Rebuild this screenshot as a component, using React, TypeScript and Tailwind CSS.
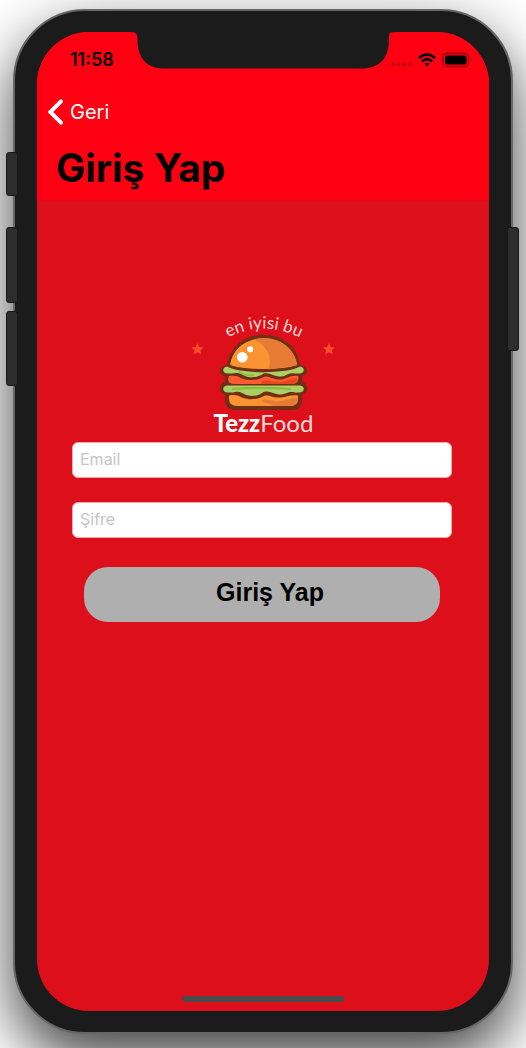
import React from "react";

function Notch() {
  return (
    <svg
      className="absolute left-1/2 top-0 h-[37px] w-[264px] -translate-x-1/2"
      viewBox="0 0 264 37"
      aria-hidden="true"
    >
      <path
        fill="#1b1b1b"
        d="M0 0H264V.3H261C258 .5 258 3 258 7C258 26 249 36.500 230 36.500H34C15 36.500 6.500 26 6.500 7C6.500 3 5.500 .5 2 .3H0Z"
      />
    </svg>
  );
}

function StatusIcons() {
  return (
    <svg className="h-5 w-20" viewBox="0 0 80 20" aria-hidden="true">
      <g fill="#000" fillOpacity=".28">
        <circle cx="2" cy="14.300" r="1.900" />
        <circle cx="7.600" cy="14.300" r="1.900" />
        <circle cx="13.200" cy="14.300" r="1.900" />
        <circle cx="18.800" cy="14.300" r="1.900" />
      </g>
      <g fill="none" stroke="#000" strokeWidth="2.600">
        <path d="M27.800 8.200Q36 .8 44.200 8.200" />
        <path d="M30.900 11.500Q36 6.800 41.100 11.500" />
      </g>
      <path d="M33.400 13.800Q36 11.500 38.600 13.800L36 16.500Z" />
      <rect x="52" y="3.500" width="25.500" height="13" rx="3.500" fill="none" stroke="#000" strokeOpacity=".38" strokeWidth="1.300" />
      <rect x="54" y="5.500" width="21.500" height="9" rx="1.800" />
      <path d="M79 8.200Q80.300 10 79 11.800Z" fillOpacity=".5" />
    </svg>
  );
}

function Logo() {
  return (
    <svg
      className="h-[140px] w-[165px]"
      viewBox="0 0 165 140"
      role="img"
      aria-label="TezzFood, en iyisi bu"
    >
      <defs>
        <path id="slogan-arc" d="M36 39Q82 8 130 39" />
        <clipPath id="bun-clip">
          <path d="M48.500 62C50 46 64 33 82.500 33S115 46 116.500 62C106 68 59 68 48.500 62Z" />
        </clipPath>
      </defs>
      <text fill="#ffd9d0" fontSize="17" className="font-['Lato']">
        <textPath href="#slogan-arc" startOffset="50%" textAnchor="middle">
          en iyisi bu
        </textPath>
      </text>
      <g fill="#ff4a2b">
        <path d="M16.500 38L18.300 42.100 22.500 42.500 19.300 45.300 20.300 49.500 16.500 47.300 12.700 49.500 13.700 45.300 10.500 42.500 14.700 42.100Z" />
        <path d="M148 38L149.800 42.100 154 42.500 150.800 45.300 151.800 49.500 148 47.300 144.200 49.500 145.200 45.300 142 42.500 146.200 42.100Z" />
      </g>
      <g fill="#702f14">
        <path d="M46 60C49 41 64 29.800 82.500 29.800S116 41 119 60C128 61 128 70 121 71V77C128 79 128 88 121 89.500V95Q121 105 110 105H55Q44 105 44 95V89.500C37 88 37 79 44 77V71C37 70 37 61 46 60Z" />
      </g>
      <g fill="#a9d065">
        <path d="M46 61.500C58 69 107 69 119 61.500C124 62 124 68 119 68.500H114C107 67 106 71 100 71.500C92 71.500 89 67 82.500 68.500C76 73 68 73.500 62 70C56 66 53 69 50 68.500H46C41 68 41 62 46 61.500Z" />
        <path d="M46 80.500H119C124 81 124 87 119 87.500H114C107 86 106 89 100 89.500C92 89.500 89 85 82.500 87C76 92 68 92 62 88.500C56 85 53 88 50 87.500H46C41 87 41 81 46 80.500Z" />
      </g>
      <path d="M51 84Q82 82 110 84" fill="none" stroke="#8abb3e" strokeWidth="2" />
      <path d="M58 67Q65 71.500 73 70" fill="none" stroke="#8abb3e" strokeWidth="1.500" />
      <path d="M48 71C55 70 57 71.500 61 73.500C69 76.500 77 75 84 71.500C89 71 92 75 100 74.500C106 74 109 70 117 71Q118 73 117 75Q116 79 111 79H54Q47 79 47 74Z" fill="#ff5a31" />
      <path d="M80 77C86 73.500 91 77.500 99 77C106 76.500 109 73 116 73Q116 79 111 79H81Z" fill="#e64622" />
      <path d="M48 90.500C55 89.500 57 90.500 61 92.500C69 95.500 77 94.500 84 90.500C89 90 92 93 100 92.500C106 92 109 89.500 117 90.500V94Q117 101 109 101H56Q48 101 48 94Z" fill="#f99431" />
      <path d="M80 95C88 93 91 97 99 96C106 95 109 92.500 117 93Q117 101 109 101H92C88 97 82 99 80 95Z" fill="#e77b35" />
      <path d="M48.500 60C51 44 64 33 82.500 33S114 44 116.500 60C106 66 59 66 48.500 60Z" fill="#f99431" stroke="#702f14" strokeWidth="1" />
      <path clipPath="url(#bun-clip)" d="M71 34C87 40 92 53 87 64.500L118 60V30H82Z" fill="#e77b35" />
      <circle cx="61.300" cy="52.300" r="5.300" fill="#fff" />
      <circle cx="69.200" cy="44.300" r="3" fill="#fff" />
      <text x="32.500" y="127" fontSize="24" fill="#fff" className="font-['Lato']">
        <tspan fontWeight="900">Tezz</tspan>
        <tspan fill="#ffdcd8">Food</tspan>
      </text>
    </svg>
  );
}

const SIDE_BUTTON = "absolute w-3 rounded-[3px] border border-[#181818] bg-[#2d2d2d]";
const FIELD =
  "block h-9 w-full rounded-[6px] border border-[#eea9a9] bg-white px-[7px] pb-[2px] text-base text-black outline-none placeholder:text-[#c5c5c8]";

export default function App() {
  return (
    <div className="flex min-h-screen flex-col overflow-hidden bg-white px-[13px] pb-[14px] pt-[9px] font-['Inter',sans-serif]">
      <div className="relative flex flex-1 flex-col">
        <div className="relative flex flex-1 flex-col rounded-[72px] border-2 border-[#666] bg-[#1b1b1b] px-[22px] pb-[21px] pt-[21px] shadow-[0_25px_60px_rgba(0,0,0,0.75)]">
          <div className="relative flex flex-1 flex-col overflow-hidden rounded-[52px] bg-[#dd0f1b]">
            <header className="border-b border-[#e10b16] bg-[#ff0013] pb-1">
              <div className="flex h-14 items-center justify-between pl-[33px] pr-[18px]">
                <time className="text-lg font-semibold text-black">11:58</time>
                <StatusIcons />
              </div>
              <Notch />
              <a href="#geri" className="flex h-12 w-fit items-center gap-[7px] pl-[11px] text-xl text-white">
                <svg className="h-7 w-[15px]" viewBox="0 0 15 28" aria-hidden="true">
                  <path d="M13 3.300L2.300 14L13 24.700" fill="none" stroke="currentColor" strokeWidth="4" strokeLinecap="round" strokeLinejoin="miter" />
                </svg>
                Geri
              </a>
              <h1 className="pl-[19px] pt-1 text-[39px] font-bold leading-[56px] text-black">Giriş Yap</h1>
            </header>

            <main className="flex flex-1 flex-col pt-[104px]">
              <div className="flex justify-center">
                <Logo />
              </div>
              <form className="-mt-[3px] flex flex-col pl-[35px] pr-[37px]" onSubmit={(e) => e.preventDefault()}>
                <input className={FIELD} type="email" placeholder="Email" aria-label="Email" />
                <input className={`${FIELD} mt-6`} type="password" placeholder="Şifre" aria-label="Şifre" />
                <button
                  type="submit"
                  className="mx-3 mt-[29px] h-[55px] rounded-[24px] bg-[#afafaf] pb-1 pl-4 font-['Liberation_Sans',sans-serif] text-[25px] font-bold text-black"
                >
                  Giriş Yap
                </button>
              </form>
              <div className="mx-auto mb-[9px] mt-auto h-[6px] w-[162px] rounded-full bg-[#4b4b4b]" />
            </main>
          </div>
        </div>

        <span className={`${SIDE_BUTTON} -left-[7px] top-[143px] h-11`} />
        <span className={`${SIDE_BUTTON} -left-[7px] top-[218px] h-[76px]`} />
        <span className={`${SIDE_BUTTON} -left-[7px] top-[302px] h-[75px]`} />
        <span className={`${SIDE_BUTTON} -right-[6px] top-[218px] h-[124px]`} />
      </div>
    </div>
  );
}
